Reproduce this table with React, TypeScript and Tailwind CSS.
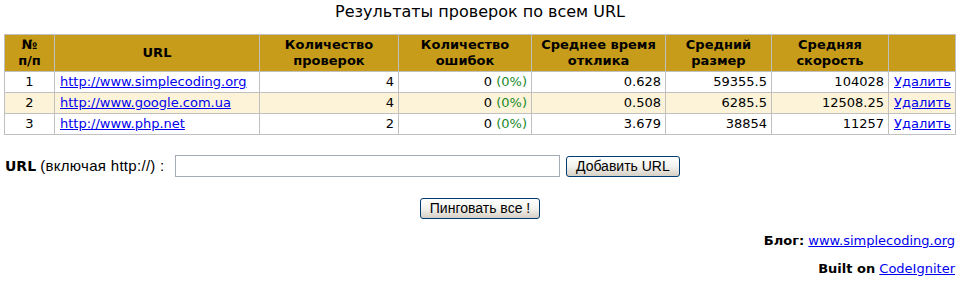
const rows = [
  { n: 1, url: "http://www.simplecoding.org", checks: 4, time: "0.628", size: "59355.5", speed: "104028" },
  { n: 2, url: "http://www.google.com.ua", checks: 4, time: "0.508", size: "6285.5", speed: "12508.25" },
  { n: 3, url: "http://www.php.net", checks: 2, time: "3.679", size: "38854", speed: "11257" },
];

const font = "font-['DejaVu_Sans',sans-serif]";
const btn =
  "h-[21px] rounded-[3px] border border-[#003c74] bg-gradient-to-b from-white via-[#f2f2ee] to-[#d6d0c5] px-[9px] text-[14px] leading-[18px] font-['Liberation_Sans',sans-serif]";

export default function App() {
  return (
    <div className={`h-[281px] w-[960px] overflow-hidden bg-white text-[13px] text-black ${font}`}>
      <h1 className="pt-[2px] text-center text-[16px] leading-[20px] font-normal">Результаты проверок по всем URL</h1>

      <table className="mt-[12px] ml-[4px] w-[951px] table-fixed border-collapse border border-[#c0c0c0]">
        <colgroup>
          <col className="w-[50px]" />
          <col className="w-[205px]" />
          <col className="w-[139px]" />
          <col className="w-[133px]" />
          <col className="w-[134px]" />
          <col className="w-[106px]" />
          <col className="w-[117px]" />
          <col className="w-[67px]" />
        </colgroup>
        <thead>
          <tr className="h-[37px] bg-[#c69c1a] text-[13px] leading-[16px] font-bold">
            <th className="border border-[#c0c0c0]">№<br />п/п</th>
            <th className="border border-[#c0c0c0]">URL</th>
            <th className="border border-[#c0c0c0]">Количество<br />проверок</th>
            <th className="border border-[#c0c0c0]">Количество<br />ошибок</th>
            <th className="border border-[#c0c0c0]">Среднее время<br />отклика</th>
            <th className="border border-[#c0c0c0]">Средний<br />размер</th>
            <th className="border border-[#c0c0c0]">Средняя<br />скорость</th>
            <th className="border border-[#c0c0c0]"></th>
          </tr>
        </thead>
        <tbody>
          {rows.map((r) => (
            <tr key={r.n} className={`h-[21px] leading-[16px] ${r.n === 2 ? "bg-[#fcf3d8]" : "bg-white"}`}>
              <td className="border border-[#c0c0c0] text-center">{r.n}</td>
              <td className="border border-[#c0c0c0] px-[5px]">
                <a href="#" className="text-[#0000ee] underline">{r.url}</a>
              </td>
              <td className="border border-[#c0c0c0] px-[4px] text-right">{r.checks}</td>
              <td className="border border-[#c0c0c0] px-[4px] text-right">
                0 <span className="text-[#1a8a2a]">(0%)</span>
              </td>
              <td className="border border-[#c0c0c0] px-[4px] text-right">{r.time}</td>
              <td className="border border-[#c0c0c0] px-[4px] text-right">{r.size}</td>
              <td className="border border-[#c0c0c0] px-[4px] text-right">{r.speed}</td>
              <td className="border border-[#c0c0c0] px-[5px]">
                <a href="#" className="text-[#0000ee] underline">Удалить</a>
              </td>
            </tr>
          ))}
        </tbody>
      </table>

      <div className="mt-[20px] ml-[5px] flex items-center gap-[6px]">
        <span className="w-[164px] whitespace-nowrap">
          <b className="text-[14px]">URL</b>{" "}
          <span className="font-['Liberation_Sans',sans-serif] text-[15px] tracking-[0.3px]">(включая http://) :</span>
        </span>
        <input className="h-[22px] w-[385px] border border-[#a5acb5] bg-white" />
        <button className={btn}>Добавить URL</button>
      </div>

      <div className="mt-[20px] flex justify-center">
        <button className={btn}>Пинговать все !</button>
      </div>

      <div className="mt-[14px] mr-[5px] text-right text-[13px] leading-[16px]">
        <b>Блог:</b> <a href="#" className="text-[#0000ee] underline">www.simplecoding.org</a>
      </div>
      <div className="mt-[12px] mr-[5px] text-right text-[13px] leading-[16px]">
        <b>Built on</b> <a href="#" className="text-[#0000ee] underline">CodeIgniter</a>
      </div>
    </div>
  );
}
